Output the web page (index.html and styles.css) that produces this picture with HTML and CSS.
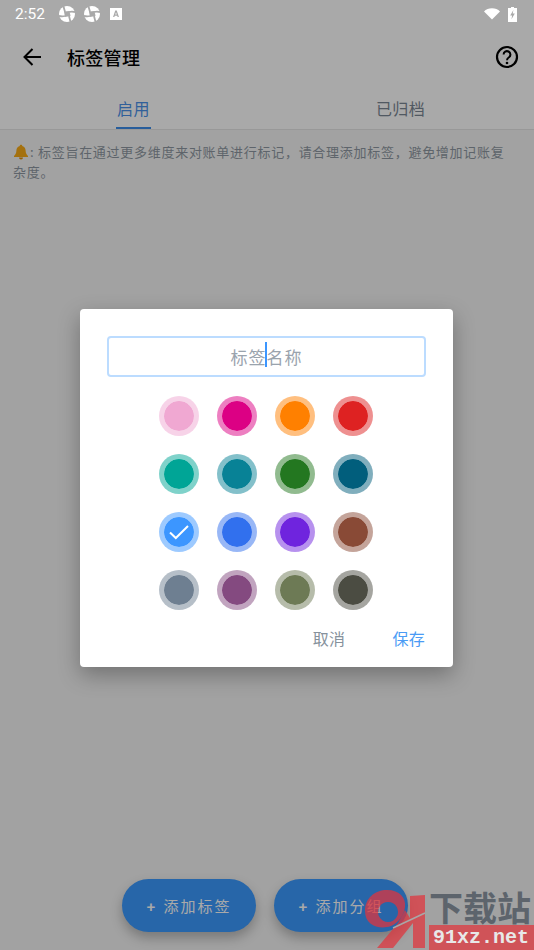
FILE: index.html
```html
<!DOCTYPE html>
<html lang="zh-CN">
<head>
    <meta charset="UTF-8">
    <meta name="viewport" content="width=device-width, initial-scale=1.0">
    <title>标签管理</title>
    <link rel="stylesheet" href="styles.css">
</head>
<body>
    <div class="page">
        <div class="status-bar">
            <div class="status-left">
                <span class="status-time">2:52</span>
                <svg class="status-swirl" viewBox="0 0 16 16"><circle cx="8" cy="8" r="8" fill="#fff"/><path fill="#a9a9a9" d="M5 5.500 10.500 5 11.500 10 6 11z"/><path d="M4.500 0C5 2.500 5.500 4 6 6M16 6C13.500 5.500 12 5.500 10 6M11.500 16C11 13.500 10.500 12 10 10M0 10C2.500 10.500 4 10.500 6 10" stroke="#a9a9a9" stroke-width="1.800" fill="none"/></svg>
                <svg class="status-swirl" viewBox="0 0 16 16"><circle cx="8" cy="8" r="8" fill="#fff"/><path fill="#a9a9a9" d="M5 5.500 10.500 5 11.500 10 6 11z"/><path d="M4.500 0C5 2.500 5.500 4 6 6M16 6C13.500 5.500 12 5.500 10 6M11.500 16C11 13.500 10.500 12 10 10M0 10C2.500 10.500 4 10.500 6 10" stroke="#a9a9a9" stroke-width="1.800" fill="none"/></svg>
                <svg class="status-note" viewBox="0 0 11 11"><path fill="#fff" fill-rule="evenodd" d="M0 0h11v11H0zM4.800 2.400 2.800 8.200h1.200l.4-1.200h2.200l.4 1.200h1.200L6.200 2.400zM4.800 6 5.500 3.900 6.200 6z"/></svg>
            </div>
            <div class="status-right">
                <svg class="status-wifi" viewBox="0 0 16 12"><path fill="#fff" d="M0 3.400C2 1.400 4.800.2 8 .2s6 1.200 8 3.200L8 11.600z"/></svg>
                <svg class="status-battery" viewBox="0 0 9 15"><path fill="#fff" fill-rule="evenodd" d="M3 0h3v1h3v14H0V1h3zM5.400 3 2.200 8.400h1.900l-.6 3.800 3.300-5.600H4.700z"/></svg>
            </div>
        </div>

        <header class="app-bar">
            <svg class="back-icon" viewBox="0 0 18 18"><path d="M18 9H2M9.500 1 1.500 9l8 8" fill="none" stroke="#000" stroke-width="2"/></svg>
            <h1 class="app-title">标签管理</h1>
            <svg class="help-icon" viewBox="0 0 24 24"><circle cx="12" cy="12" r="10" fill="none" stroke="#000" stroke-width="2.200"/><path d="M8.600 9.600a3.400 3.400 0 1 1 5.400 2.700c-1.300.9-2 1.500-2 3" fill="none" stroke="#000" stroke-width="2"/><circle cx="12" cy="18" r="1.300"/></svg>
        </header>

        <nav class="tabs">
            <div class="tab tab-active"><span class="tab-label">启用</span></div>
            <div class="tab"><span class="tab-label">已归档</span></div>
        </nav>

        <p class="tip">
            <svg class="tip-bell" viewBox="0 0 16 16"><path fill="#f7ab18" d="M8 .8c.8 0 1.200.5 1.300 1.100C11.600 2.500 12.500 4.300 12.600 6.500c.1 2.500.7 3.900 2.400 5.500v1H1v-1c1.700-1.600 2.300-3 2.400-5.500C3.500 4.300 4.400 2.500 6.700 1.900 6.800 1.300 7.200.8 8 .8z"/><path fill="#e0900c" d="M6 13.500h4a2 2 0 0 1-4 0z"/></svg><span class="tip-text">: 标签旨在通过更多维度来对账单进行标记，请合理添加标签，避免增加记账复杂度。</span>
        </p>

        <div class="bottom-actions">
            <button class="add-btn"><span class="add-plus">+</span>添加标签</button>
            <button class="add-btn"><span class="add-plus">+</span>添加分组</button>
        </div>

        <div class="overlay">
            <div class="dialog">
                <div class="name-input">
                    <span class="name-placeholder">标签<span class="caret"></span>名称</span>
                </div>
                <div class="swatches">
                    <div class="swatch c-pink"></div>
                    <div class="swatch c-magenta"></div>
                    <div class="swatch c-orange"></div>
                    <div class="swatch c-red"></div>
                    <div class="swatch c-teal"></div>
                    <div class="swatch c-cyan"></div>
                    <div class="swatch c-green"></div>
                    <div class="swatch c-navy"></div>
                    <div class="swatch c-sky">
                        <svg class="check" viewBox="0 0 20 16"><path d="M1 8.500 6.800 14 19 2" fill="none" stroke="#fff" stroke-width="2"/></svg>
                    </div>
                    <div class="swatch c-blue"></div>
                    <div class="swatch c-purple"></div>
                    <div class="swatch c-brown"></div>
                    <div class="swatch c-slate"></div>
                    <div class="swatch c-plum"></div>
                    <div class="swatch c-olive"></div>
                    <div class="swatch c-dark"></div>
                </div>
                <div class="dialog-actions">
                    <span class="action-cancel">取消</span>
                    <span class="action-save">保存</span>
                </div>
            </div>
        </div>

        <!-- watermark -->
        <div class="watermark">
            <svg class="wm-logo" viewBox="0 0 70 60">
                <g class="wm-mark">
                    <path fill-rule="evenodd" d="M27 0C40 0 46 8 45 17 44 26 38 33 31 36 20 40 5 36 5 21 5 8 15 0 27 0zM28 12a10 10 0 1 0 .1 0z"/>
                    <path d="M38 33 45 20 53 33 33 58H17z"/>
                    <path d="M50 6 65 5V58H53V33H50z"/>
                </g>
                <path class="wm-slash" d="M33 38 65 23"/>
            </svg>
            <div class="wm-text">
                <div class="wm-name">下载站</div>
                <div class="wm-url">91xz.net</div>
            </div>
        </div>
    </div>
</body>
</html>
```

FILE: styles.css
```css
* {
    box-sizing: border-box;
}

html, body {
    margin: 0;
    padding: 0;
}

body {
    font-family: "Noto Sans CJK SC", "Noto Sans", sans-serif;
    background: #f4f4f4;
}

.page {
    position: relative;
    width: 534px;
    height: 950px;
    overflow: hidden;
    background: #f4f4f4;
}

/* status bar sits above the scrim */
.status-bar {
    position: relative;
    z-index: 2;
    height: 28px;
    padding: 0 17px 0 15px;
    display: flex;
    align-items: center;
    justify-content: space-between;
}

.status-left, .status-right {
    display: flex;
    align-items: center;
}

.status-time {
    font-family: Roboto, sans-serif;
    font-size: 15.5px;
    color: #fff;
    margin-right: 11px;
    width: 33px;
}

.status-swirl {
    width: 16px;
    height: 16px;
    margin-right: 9px;
}

.status-note {
    width: 12px;
    height: 12px;
    margin-left: 1px;
}

.status-wifi {
    width: 16px;
    height: 12px;
    margin-right: 8px;
}

.status-battery {
    width: 9px;
    height: 15px;
}

.app-bar {
    display: flex;
    align-items: center;
    height: 86px;
    margin-top: -28px;
    padding: 28px 15px 0 23px;
    background: #fff;
}

.back-icon {
    width: 18px;
    height: 18px;
    margin-right: 26px;
}

.app-title {
    flex: 1;
    margin: 0;
    font-size: 18px;
    font-weight: 500;
    letter-spacing: .3px;
    color: #000;
}

.help-icon {
    width: 24px;
    height: 24px;
}

.tabs {
    display: flex;
    height: 44px;
    background: #fff;
    border-bottom: 1px solid #e6e6e6;
}

.tab {
    flex: 1;
    display: flex;
    justify-content: center;
}

.tab-label {
    height: 43px;
    padding: 0 1px;
    line-height: 44px;
    font-size: 16px;
    letter-spacing: .4px;
    color: #7b8794;
}

.tab-active .tab-label {
    color: #4a92e8;
    border-bottom: 2px solid #3c8dea;
}

.tip {
    margin: 0;
    padding: 12px 25px 12px 13px;
    font-size: 13px;
    line-height: 20px;
    letter-spacing: .72px;
    color: #8f98a2;
}

.tip-bell {
    width: 16px;
    height: 16px;
    margin-right: 1px;
    vertical-align: -3px;
}

.bottom-actions {
    position: absolute;
    left: 122px;
    top: 879px;
    display: flex;
    gap: 18px;
}

.add-btn {
    width: 134px;
    height: 53px;
    border: none;
    border-radius: 27px;
    background: #3b9aff;
    color: #fff;
    font-family: inherit;
    font-size: 15px;
    letter-spacing: 2px;
    box-shadow: 0 6px 12px rgba(0, 0, 0, .25);
}

.add-plus {
    margin-right: 6px;
    font-family: "Liberation Sans", sans-serif;
    font-weight: 700;
}

.overlay {
    position: absolute;
    top: 0;
    left: 0;
    right: 0;
    bottom: 0;
    z-index: 1;
    background: rgba(0, 0, 0, .337);
    display: flex;
    justify-content: center;
    padding: 309px 1px 0 0;
}

.dialog {
    width: 373px;
    height: 358px;
    padding: 27px 27px 0;
    background: #fff;
    border-radius: 4px;
    box-shadow: 0 8px 22px rgba(0, 0, 0, .3);
}

.name-input {
    height: 41px;
    border: 2px solid #bcdcff;
    border-radius: 4px;
    text-align: center;
    line-height: 37px;
}

.name-placeholder {
    position: relative;
    font-size: 17px;
    letter-spacing: 1px;
    color: #9aa3ad;
}

.caret {
    position: absolute;
    width: 2px;
    height: 25px;
    background: #3c96ff;
    margin-left: -2px;
    top: -2px;
}

.swatches {
    display: grid;
    grid-template-columns: repeat(4, 40px);
    gap: 18px;
    justify-content: center;
    margin-top: 19px;
    padding-right: 1px;
}

.swatch {
    width: 40px;
    height: 40px;
    border-radius: 50%;
    border: 5px solid;
    background-clip: padding-box;
    display: flex;
    align-items: center;
    justify-content: center;
}

.check {
    width: 20px;
    height: 16px;
}

.c-pink { background-color: #f0a8d2; border-color: rgba(240, 168, 210, .5); }
.c-magenta { background-color: #dc0084; border-color: rgba(220, 0, 132, .5); }
.c-orange { background-color: #ff8000; border-color: rgba(255, 128, 0, .5); }
.c-red { background-color: #de2222; border-color: rgba(222, 34, 34, .5); }
.c-teal { background-color: #00a596; border-color: rgba(0, 165, 150, .5); }
.c-cyan { background-color: #088296; border-color: rgba(8, 130, 150, .5); }
.c-green { background-color: #237720; border-color: rgba(35, 119, 32, .5); }
.c-navy { background-color: #015e7c; border-color: rgba(1, 94, 124, .5); }
.c-sky { background-color: #3c96ff; border-color: rgba(60, 150, 255, .5); }
.c-blue { background-color: #3170ee; border-color: rgba(49, 112, 238, .5); }
.c-purple { background-color: #6f24de; border-color: rgba(111, 36, 222, .5); }
.c-brown { background-color: #894a36; border-color: rgba(137, 74, 54, .5); }
.c-slate { background-color: #6e7f91; border-color: rgba(110, 127, 145, .5); }
.c-plum { background-color: #844a80; border-color: rgba(132, 74, 128, .5); }
.c-olive { background-color: #6d7a55; border-color: rgba(109, 122, 85, .5); }
.c-dark { background-color: #4b4c42; border-color: rgba(75, 76, 66, .5); }

.dialog-actions {
    display: flex;
    justify-content: flex-end;
    gap: 47px;
    margin-top: 16px;
    padding-right: 1px;
    font-size: 16px;
    line-height: 24px;
    letter-spacing: .3px;
}

.action-cancel {
    color: #86919c;
}

.action-save {
    color: #4a9bf5;
}

.watermark {
    position: absolute;
    z-index: 3;
    left: 360px;
    top: 890px;
    width: 174px;
    height: 60px;
    display: flex;
}

.wm-logo {
    width: 70px;
    height: 60px;
    flex: none;
}

.wm-mark {
    fill: #e2343c;
    opacity: .72;
}

.wm-slash {
    fill: none;
    stroke: #a8a8a8;
    stroke-width: 1.5;
}

.wm-text {
    flex: 1;
    min-width: 0;
}

.wm-name {
    height: 35px;
    font-size: 34px;
    font-weight: 700;
    line-height: 34px;
    margin-left: -1px;
    color: #5d646c;
    white-space: nowrap;
}

.wm-url {
    height: 25px;
    margin-left: -1px;
    padding-left: 4px;
    background: rgba(226, 52, 60, .72);
    font-family: "Liberation Mono", monospace;
    font-size: 20px;
    font-weight: 700;
    line-height: 25px;
    color: #e8e8e8;
    white-space: nowrap;
    overflow: hidden;
}
```
